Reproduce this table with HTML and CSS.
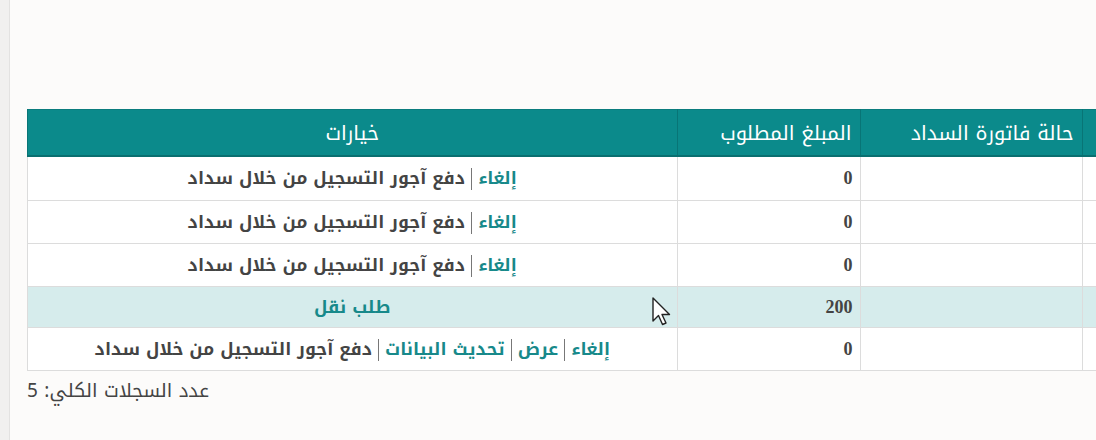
FILE: index.html
```html
<!DOCTYPE html>
<html lang="ar">
<head>
<meta charset="utf-8">
<link rel="stylesheet" href="styles.css">
</head>
<body>
<div class="page">
  <div class="side"></div>
  <main class="main">
    <table class="grid">
      <thead>
        <tr>
          <th class="c-extra"></th>
          <th class="c-status">حالة فاتورة السداد</th>
          <th class="c-amount">المبلغ المطلوب</th>
          <th class="c-opts center">خيارات</th>
        </tr>
      </thead>
      <tbody>
        <tr>
          <td></td><td></td><td class="num">0</td>
          <td class="opts"><a class="lnk">إلغاء</a><span class="sep"></span><span class="txt">دفع آجور التسجيل من خلال سداد</span></td>
        </tr>
        <tr>
          <td></td><td></td><td class="num">0</td>
          <td class="opts"><a class="lnk">إلغاء</a><span class="sep"></span><span class="txt">دفع آجور التسجيل من خلال سداد</span></td>
        </tr>
        <tr>
          <td></td><td></td><td class="num">0</td>
          <td class="opts"><a class="lnk">إلغاء</a><span class="sep"></span><span class="txt">دفع آجور التسجيل من خلال سداد</span></td>
        </tr>
        <tr class="hl">
          <td></td><td></td><td class="num">200</td>
          <td class="opts"><a class="lnk">طلب نقل</a></td>
        </tr>
        <tr>
          <td></td><td></td><td class="num">0</td>
          <td class="opts"><a class="lnk">إلغاء</a><span class="sep"></span><a class="lnk">عرض</a><span class="sep"></span><a class="lnk">تحديث البيانات</a><span class="sep"></span><span class="txt">دفع آجور التسجيل من خلال سداد</span></td>
        </tr>
      </tbody>
    </table>
    <div class="total">عدد السجلات الكلي: 5</div>
  </main>
</div>
<svg class="cursor" width="22" height="32" viewBox="0 0 22 32"><path d="M1 1 L1 24 L6.5 18.5 L10.5 27.5 L14 26 L10 17.5 L17.5 17.5 Z" fill="#fff" stroke="#222" stroke-width="1.4" stroke-linejoin="round"/></svg>
</body>
</html>
```
FILE: styles.css
```css
html, body {
  margin: 0;
  padding: 0;
  height: 100%;
  overflow: hidden;
  background: #fcfbfa;
}
body {
  font-family: "Noto Kufi Arabic", "Noto Sans Arabic", "DejaVu Sans", sans-serif;
  position: relative;
}
.page {
  display: flex;
  height: 440px;
}
.side {
  width: 9px;
  flex: none;
  background: #f1f0ef;
  border-right: 1px solid #e3e2e1;
}
.main {
  flex: 1;
  min-width: 0;
  padding: 109px 0 0 17px;
  overflow: hidden;
}
.grid {
  direction: rtl;
  border-collapse: collapse;
  width: 1168px;
  table-layout: fixed;
  background: #fff;
}
.grid th {
  background: #0b8a8b;
  color: #fff;
  font-weight: normal;
  font-size: 20px;
  height: 45px;
  padding: 0 8px;
  text-align: right;
  border-left: 1px solid #087576;
  border-bottom: 2px solid #0a6f70;
  border-top: 1px solid #0a7c7d;
}
.grid th.center { text-align: center; }
.c-extra { width: 96px; }
.c-status { width: 205px; }
.c-amount { width: 166px; }
.grid td {
  border: 1px solid #dcdcdc;
  height: 42px;
  padding: 0 7px;
  font-size: 17.5px;
  color: #444;
  font-weight: bold;
  text-align: right;
}
.grid tbody tr:first-child td { height: 43px; }
.grid td.num {
  font-family: "Liberation Serif", serif;
  font-size: 18px;
  color: #444;
}
.grid td.opts { text-align: center; }
.grid tr.hl td { background: #d6ecec; height: 40px; }
.lnk {
  color: #17898a;
  text-decoration: none;
}
.sep {
  display: inline-block;
  width: 1px;
  height: 22px;
  background: #777;
  margin: 0 6px;
  vertical-align: middle;
}
.txt { color: #444; }
.total {
  direction: rtl;
  text-align: left;
  font-size: 19px;
  color: #444;
  margin-top: 2px;
  width: 240px;
}
.cursor {
  position: absolute;
  left: 652px;
  top: 297px;
}
```
